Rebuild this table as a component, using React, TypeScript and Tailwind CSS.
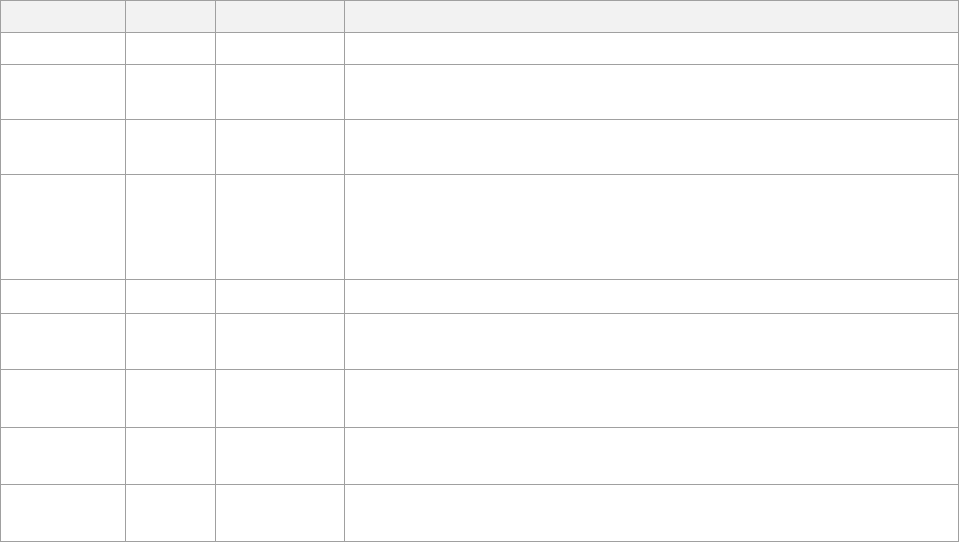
import React from "react";

const cols = ["w-[125px]", "w-[90px]", "w-[129px]", "w-[614px]"];
const rowHeights = ["h-[32px]", "h-[55px]", "h-[55px]", "h-[105px]", "h-[34px]", "h-[56px]", "h-[58px]", "h-[57px]", "h-[57px]"];

export default function App() {
  return (
    <div className="w-[959px] h-[542px] bg-white font-['Liberation_Sans',sans-serif]">
      <div className="flex flex-col border-l border-t border-[#a0a0a0] w-[959px]">
        <div className="flex h-[32px] bg-[#f2f2f2]">
          {cols.map((c, i) => (
            <div key={i} className={`${c} shrink-0 border-r border-b border-[#a0a0a0]`} />
          ))}
        </div>
        {rowHeights.map((h, r) => (
          <div key={r} className={`flex ${h}`}>
            {cols.map((c, i) => (
              <div key={i} className={`${c} shrink-0 border-r border-b border-[#a0a0a0]`} />
            ))}
          </div>
        ))}
      </div>
    </div>
  );
}
